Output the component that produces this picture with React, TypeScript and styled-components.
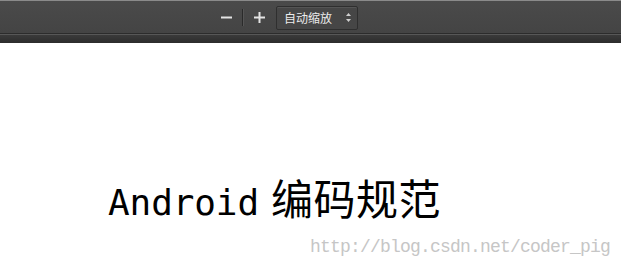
import React from "react";
import styled, { createGlobalStyle } from "styled-components";

const Global = createGlobalStyle`
  html, body { margin: 0; padding: 0; background: #ffffff; }
  body { width: 621px; height: 269px; overflow: hidden; }
`;

const Page = styled.div`
  width: 621px;
  height: 269px;
  display: flex;
  flex-direction: column;
  background: #ffffff;
`;

const Toolbar = styled.div`
  height: 32px;
  border-top: 1px solid #8a8a8a;
  background: linear-gradient(#4a4a4a, #444444);
  display: flex;
  align-items: center;
  padding-left: 220px;
  box-sizing: content-box;
`;

const ToolbarShadow = styled.div`
  height: 9px;
  border-top: 1px solid #2c2c2c;
  box-shadow: inset 0 1px 0 #575757;
  background: linear-gradient(#3c3c3c, #2c2c2c);
`;

const IconButton = styled.button`
  width: 12px;
  height: 20px;
  padding: 0;
  border: none;
  background: none;
  display: flex;
  align-items: center;
  justify-content: center;
`;

const Separator = styled.div`
  width: 1px;
  height: 17px;
  background: #2a2a2a;
  box-shadow: 1px 0 0 #555555;
  margin: 0 10px 0 10px;
`;

const Select = styled.div`
  margin-left: 11px;
  width: 67px;
  height: 22px;
  border: 1px solid #2f2f2f;
  border-radius: 2px;
  background: #464646;
  box-shadow: inset 0 1px 0 #555555;
  display: flex;
  align-items: center;
  justify-content: space-between;
  padding: 0 6px 0 7px;
  box-sizing: content-box;
  margin-top: 1px;
`;

const SelectText = styled.span`
  font-family: "Noto Sans CJK SC", sans-serif;
  font-size: 12px;
  color: #ebebeb;
`;

const Content = styled.div`
  flex: 1;
  display: flex;
  flex-direction: column;
`;

const Title = styled.h1`
  margin: 132px 0 0 108px;
  display: flex;
  align-items: baseline;
  font-weight: normal;
  color: #000000;
  height: 44px;
  line-height: 44px;
`;

const Latin = styled.span`
  font-family: "DejaVu Sans Mono", monospace;
  font-size: 36px;
  letter-spacing: -0.1px;
`;

const Cjk = styled.span`
  font-family: "Noto Sans CJK SC", sans-serif;
  font-size: 42px;
  margin-left: 12px;
  letter-spacing: 0.5px;
`;

const Watermark = styled.div`
  align-self: flex-end;
  margin: 18px 11px 0 0;
  font-family: "Liberation Mono", monospace;
  font-size: 18px;
  letter-spacing: -0.8px;
  color: #c6c6c6;
  line-height: 20px;
`;

export default function App() {
  return (
    <>
      <Global />
      <Page>
        <Toolbar>
          <IconButton aria-label="zoom out">
            <svg width="11" height="11" viewBox="0 0 11 11">
              <rect x="0" y="4.5" width="11" height="2" fill="#e4e4e4" />
            </svg>
          </IconButton>
          <Separator />
          <IconButton aria-label="zoom in">
            <svg width="11" height="11" viewBox="0 0 11 11">
              <rect x="0" y="4.5" width="11" height="2" fill="#e4e4e4" />
              <rect x="4.5" y="0" width="2" height="11" fill="#e4e4e4" />
            </svg>
          </IconButton>
          <Select>
            <SelectText>自动缩放</SelectText>
            <svg width="5" height="9" viewBox="0 0 5 9">
              <path d="M2.5 0 L5 3 L0 3 Z" fill="#d0d0d0" />
              <path d="M2.5 9 L5 6 L0 6 Z" fill="#d0d0d0" />
            </svg>
          </Select>
        </Toolbar>
        <ToolbarShadow />
        <Content>
          <Title>
            <Latin>Android</Latin>
            <Cjk>编码规范</Cjk>
          </Title>
          <Watermark>http://blog.csdn.net/coder_pig</Watermark>
        </Content>
      </Page>
    </>
  );
}
